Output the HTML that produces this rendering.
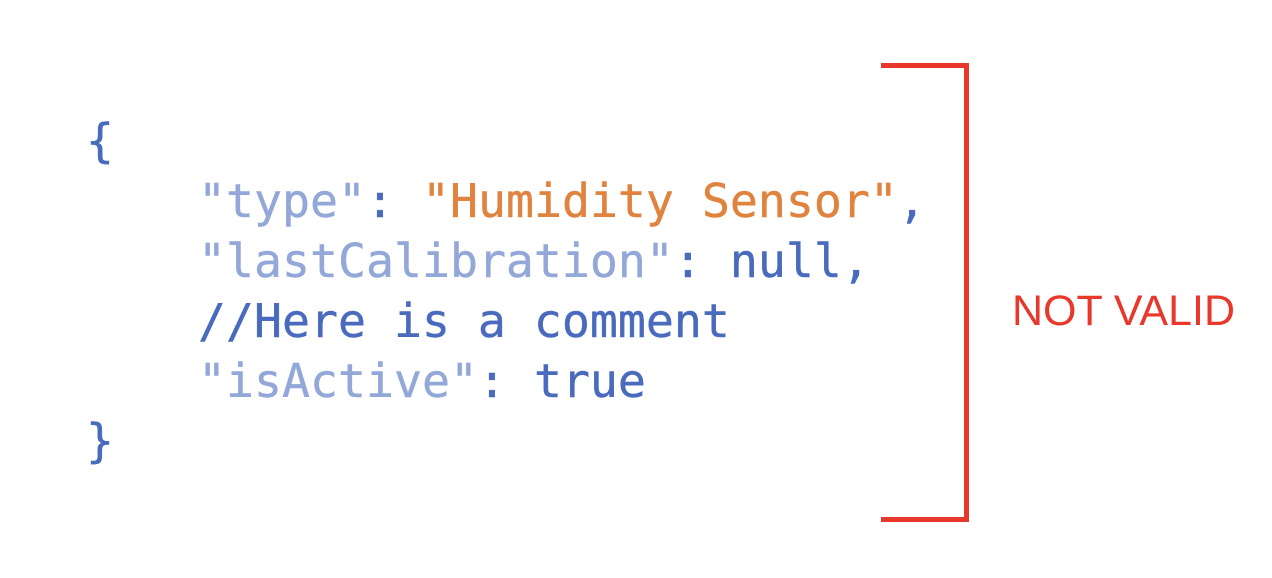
<!DOCTYPE html>
<html><head><meta charset="utf-8"><style>
html,body{margin:0;padding:0;background:#fff;width:1272px;height:578px;overflow:hidden;position:relative}
pre{position:absolute;left:86px;top:111px;margin:0;font-family:"DejaVu Sans Mono","Liberation Mono",monospace;font-size:46.5px;line-height:60px;color:#4a6bbd;-webkit-text-stroke:0.4px currentColor}
.k{color:#93a8d8}.s{color:#e0833f}
.b{position:absolute;background:#e8372b}
.t{position:absolute;left:1012px;top:286px;font-family:"Liberation Sans",sans-serif;font-size:43px;color:#e8372b;line-height:50px;white-space:nowrap;letter-spacing:0px}
</style></head><body>
<pre>{
    <span class="k">"type"</span>: <span class="s">"Humidity Sensor"</span>,
    <span class="k">"lastCalibration"</span>: null,
    //Here is a comment
    <span class="k">"isActive"</span>: true
}</pre>
<div class="b" style="left:881px;top:63px;width:88px;height:5px"></div>
<div class="b" style="left:964px;top:63px;width:5px;height:459px"></div>
<div class="b" style="left:881px;top:517px;width:88px;height:5px"></div>
<div class="t">NOT VALID</div>
</body></html>
